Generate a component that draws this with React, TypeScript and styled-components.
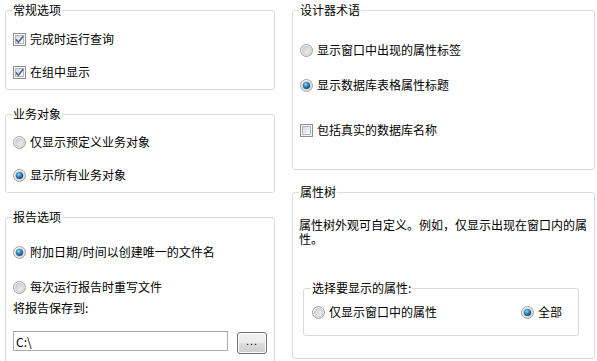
import styled, { createGlobalStyle } from 'styled-components';

const GlobalStyle = createGlobalStyle`
  html, body {
    margin: 0;
    padding: 0;
    background: #fff;
    overflow: hidden;
  }
  body {
    font-family: 'Noto Sans CJK SC', 'Liberation Sans', sans-serif;
    font-size: 12px;
    color: #000;
  }
`;

function CheckIcon({ checked }: { checked?: boolean }) {
  return (
    <svg width='13' height='13' viewBox='0 0 13 13'>
      <defs>
        <linearGradient id='cb-in' x1='0' y1='0' x2='1' y2='1'>
          <stop offset='0' stopColor='#d4d6d8' />
          <stop offset='1' stopColor='#fbfbfb' />
        </linearGradient>
      </defs>
      <rect x='0.5' y='0.5' width='12' height='12' fill='#f6f6f6' stroke='#8e8f8f' />
      <rect x='2.5' y='2.5' width='8' height='8' fill='url(#cb-in)' stroke='#b3b7bb' />
      {checked && (
        <path d='M2.8 6.4 L5.3 9.2 L10.2 3.2' fill='none' stroke='#4f639c' strokeWidth='1.6' />
      )}
    </svg>
  );
}

function RadioIcon({ checked }: { checked?: boolean }) {
  return (
    <svg width='13' height='13' viewBox='0 0 13 13'>
      <defs>
        <linearGradient id='rb-out' x1='0' y1='0' x2='1' y2='1'>
          <stop offset='0' stopColor='#fafafa' />
          <stop offset='1' stopColor='#d6d6d6' />
        </linearGradient>
        <linearGradient id='rb-in' x1='0' y1='0' x2='1' y2='1'>
          <stop offset='0' stopColor='#c9cbcd' />
          <stop offset='1' stopColor='#f4f4f4' />
        </linearGradient>
        <radialGradient id='rb-dot' cx='0.4' cy='0.35' r='0.7'>
          <stop offset='0' stopColor='#9edcff' />
          <stop offset='0.45' stopColor='#2f88c4' />
          <stop offset='1' stopColor='#0d3a5e' />
        </radialGradient>
      </defs>
      <circle cx='6.5' cy='6.5' r='6' fill='url(#rb-out)' stroke='#a3a3a3' />
      <circle cx='6.5' cy='6.5' r='4' fill='url(#rb-in)' stroke='#bfc2c5' strokeWidth='0.6' />
      {checked && <circle cx='6.5' cy='6.5' r='3.6' fill='url(#rb-dot)' />}
    </svg>
  );
}

const Page = styled.div`
  display: grid;
  grid-template-columns: 270px 303px;
  align-items: start;
  column-gap: 17px;
  padding: 3px 0 0 5px;
  height: 361px;
  box-sizing: border-box;
  overflow: hidden;
`;

const Column = styled.div<{ $gap: number }>`
  display: flex;
  flex-direction: column;
  gap: ${({ $gap }) => $gap}px;
`;

const Group = styled.fieldset<{ $h: number; $pt: number }>`
  margin: 0;
  padding: ${({ $pt }) => $pt}px 7px 0;
  border: 1px solid #d5dbe0;
  border-radius: 3px;
  height: ${({ $h }) => $h}px;
  box-sizing: border-box;
  min-width: 0;
`;

const Legend = styled.legend`
  padding: 0 1px;
  margin-left: -1px;
  line-height: 14px;
`;

const Stack = styled.div<{ $gap: number }>`
  display: flex;
  flex-direction: column;
  gap: ${({ $gap }) => $gap}px;
`;

const Option = styled.label<{ $mt?: number }>`
  display: flex;
  align-items: center;
  gap: 4px;
  height: 14px;
  line-height: 14px;
  white-space: nowrap;
  margin-top: ${({ $mt }) => $mt || 0}px;

  svg {
    flex: none;
  }
`;

const Caption = styled.div<{ $mt?: number }>`
  line-height: 14px;
  margin-top: ${({ $mt }) => $mt || 0}px;
`;

const PathRow = styled.div`
  display: flex;
  align-items: flex-start;
  gap: 9px;
  margin-top: 16px;
`;

const PathInput = styled.input`
  width: 215px;
  height: 20px;
  box-sizing: border-box;
  margin: 0;
  padding: 0 2px;
  border: 1px solid #abadb3;
  border-top-color: #9ea0a6;
  font: inherit;
  font-size: 12px;
  color: #000;
  background: #fff;
  outline: none;
`;

const BrowseButton = styled.button`
  width: 30px;
  height: 22px;
  margin-top: 1px;
  padding: 0 0 4px;
  box-sizing: border-box;
  border: 1px solid #707070;
  border-radius: 3px;
  background: linear-gradient(#f2f2f2 0%, #ebebeb 50%, #dddddd 51%, #cfcfcf 100%);
  box-shadow: inset 0 0 0 1px #fcfcfc;
  font-family: 'Liberation Sans', sans-serif;
  font-size: 11px;
  line-height: 10px;
  letter-spacing: 1px;
  color: #000;
`;

const Description = styled.p`
  margin: 0 -4px 0 -1px;
  line-height: 14px;
`;

const InnerGroup = styled.fieldset`
  margin: 35px 8px 0 3px;
  padding: 10px 7px 0 8px;
  border: 1px solid #d5dbe0;
  border-radius: 3px;
  height: 55px;
  box-sizing: border-box;
  min-width: 0;
`;

const SplitRow = styled.div`
  display: flex;
  justify-content: space-between;
  padding-right: 9px;
`;

export default function App() {
  return (
    <>
      <GlobalStyle />
      <Page>
        <Column $gap={17}>
          <Group $h={87} $pt={15}>
            <Legend>常规选项</Legend>
            <Stack $gap={19}>
              <Option>
                <CheckIcon checked />
                完成时运行查询
              </Option>
              <Option>
                <CheckIcon checked />
                在组中显示
              </Option>
            </Stack>
          </Group>

          <Group $h={86} $pt={14}>
            <Legend>业务对象</Legend>
            <Stack $gap={19}>
              <Option>
                <RadioIcon />
                仅显示预定义业务对象
              </Option>
              <Option>
                <RadioIcon checked />
                显示所有业务对象
              </Option>
            </Stack>
          </Group>

          <Group $h={170} $pt={21}>
            <Legend>报告选项</Legend>
            <Option>
              <RadioIcon checked />
              附加日期/时间以创建唯一的文件名
            </Option>
            <Option $mt={21}>
              <RadioIcon />
              每次运行报告时重写文件
            </Option>
            <Caption $mt={7}>将报告保存到:</Caption>
            <PathRow>
              <PathInput defaultValue='C:\' />
              <BrowseButton type='button'>...</BrowseButton>
            </PathRow>
          </Group>
        </Column>

        <Column $gap={15}>
          <Group $h={167} $pt={26}>
            <Legend>设计器术语</Legend>
            <Option>
              <RadioIcon />
              显示窗口中出现的属性标签
            </Option>
            <Option $mt={21}>
              <RadioIcon checked />
              显示数据库表格属性标题
            </Option>
            <Option $mt={31}>
              <CheckIcon />
              包括真实的数据库名称
            </Option>
          </Group>

          <Group $h={174} $pt={19}>
            <Legend>属性树</Legend>
            <Description>
              属性树外观可自定义。例如，仅显示出现在窗口内的属性。
            </Description>
            <InnerGroup>
              <Legend>选择要显示的属性:</Legend>
              <SplitRow>
                <Option>
                  <RadioIcon />
                  仅显示窗口中的属性
                </Option>
                <Option>
                  <RadioIcon checked />
                  全部
                </Option>
              </SplitRow>
            </InnerGroup>
          </Group>
        </Column>
      </Page>
    </>
  );
}
